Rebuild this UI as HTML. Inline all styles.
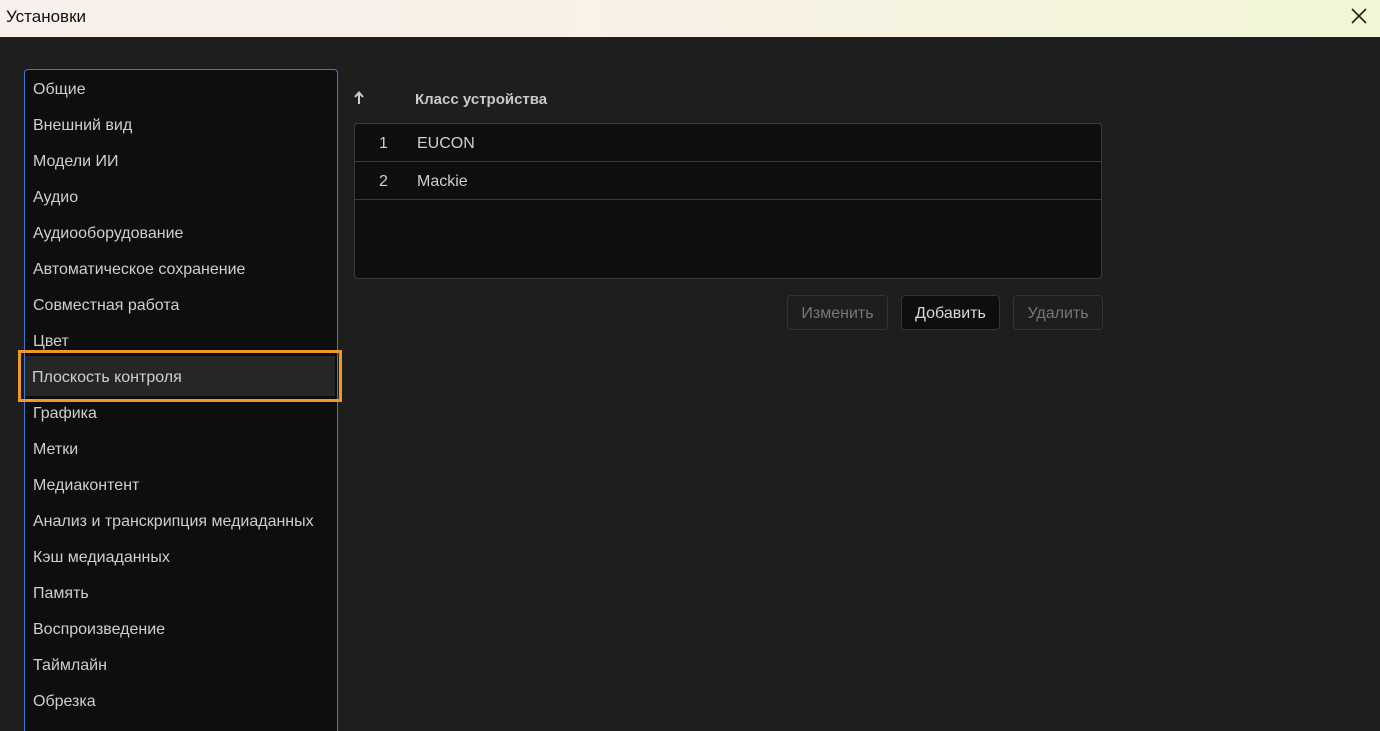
<!DOCTYPE html>
<html><head><meta charset="utf-8"><style>
*{margin:0;padding:0;box-sizing:border-box}
html,body{width:1380px;height:731px;overflow:hidden}
body{background:#1e1e1e;font-family:"Liberation Sans",sans-serif;position:relative}
.title{position:absolute;left:0;top:0;width:1380px;height:37px;background:linear-gradient(90deg,#f9efec,#f8f2e6 50%,#f2f6d6);}
.title span{position:absolute;left:6px;top:7px;font-size:17px;color:#111}
.side{position:absolute;left:24px;top:69px;width:314px;height:662px;border:1px solid #3d7bcc;border-bottom:none;border-radius:4px 4px 0 0;background:#0e0e0e}
.item{position:absolute;left:8px;font-size:16px;color:#cfcfcf;height:36px;line-height:36px}
.sel{position:absolute;left:18px;top:350px;width:324px;height:52px;border:3px solid #f0962a}
.sel div{position:absolute;left:4px;top:3px;right:4px;bottom:3px;background:#262626}
.hdr{position:absolute;top:91px;font-size:15px;font-weight:bold;color:#c9c9c9}
.tbl{position:absolute;left:354px;top:123px;width:748px;height:156px;border:1px solid #3a3a3a;border-radius:4px;background:#0e0e0e;overflow:hidden}
.row{height:38px;border-bottom:1px solid #3a3a3a;position:relative;font-size:16px;color:#cfcfcf;line-height:39px}
.row .n{position:absolute;left:24px}.row .t{position:absolute;left:62px}
.btn{position:absolute;top:295px;height:35px;border:1px solid #333;border-radius:4px;font-size:16px;color:#777;text-align:center;line-height:35px}
</style></head><body>
<div class="title"><span>Установки</span>
<svg style="position:absolute;left:1350px;top:7px" width="18" height="18"><path d="M2 2L16 16M16 2L2 16" stroke="#222" stroke-width="1.6"/></svg></div>
<div class="side">
<div class="item" style="top:2px">Общие</div>
<div class="item" style="top:38px">Внешний вид</div>
<div class="item" style="top:74px">Модели ИИ</div>
<div class="item" style="top:110px">Аудио</div>
<div class="item" style="top:146px">Аудиооборудование</div>
<div class="item" style="top:182px">Автоматическое сохранение</div>
<div class="item" style="top:218px">Совместная работа</div>
<div class="item" style="top:254px">Цвет</div>
<div class="item" style="top:326px">Графика</div>
<div class="item" style="top:362px">Метки</div>
<div class="item" style="top:398px">Медиаконтент</div>
<div class="item" style="top:434px">Анализ и транскрипция медиаданных</div>
<div class="item" style="top:470px">Кэш медиаданных</div>
<div class="item" style="top:506px">Память</div>
<div class="item" style="top:542px">Воспроизведение</div>
<div class="item" style="top:578px">Таймлайн</div>
<div class="item" style="top:614px">Обрезка</div>
</div>
<div class="sel"><div></div></div>
<div class="item" style="left:32px;top:360px;position:absolute">Плоскость контроля</div>
<svg style="position:absolute;left:353px;top:91px" width="12" height="14"><path d="M6 13V2M2 6L6 1.5L10 6" stroke="#ccc" stroke-width="2" fill="none"/></svg>
<div class="hdr" style="left:415px">Класс устройства</div>
<div class="tbl">
<div class="row"><span class="n">1</span><span class="t">EUCON</span></div>
<div class="row"><span class="n">2</span><span class="t">Mackie</span></div>
</div>
<div class="btn" style="left:787px;width:101px">Изменить</div>
<div class="btn" style="left:901px;width:99px;background:#0e0e0e;color:#d8d8d8">Добавить</div>
<div class="btn" style="left:1013px;width:90px">Удалить</div>
</body></html>
